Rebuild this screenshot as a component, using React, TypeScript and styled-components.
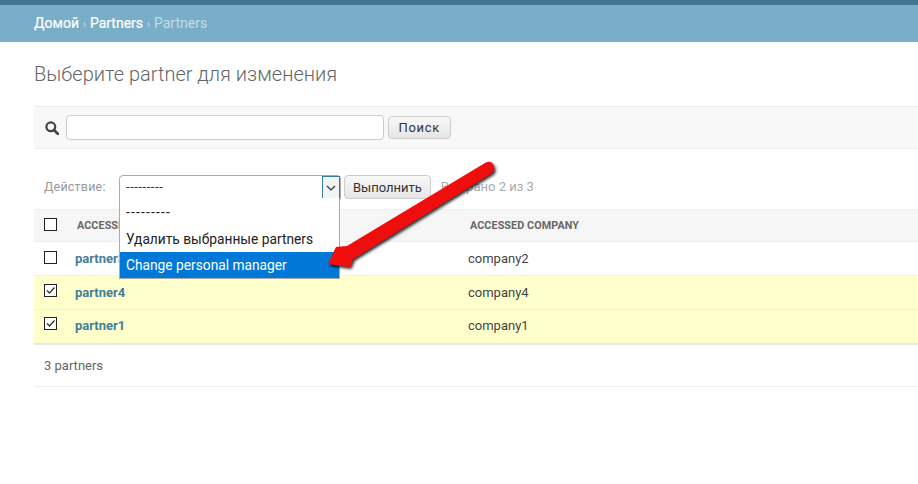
import React from "react";
import styled, { createGlobalStyle } from "styled-components";

const Global = createGlobalStyle`
  html, body { margin: 0; padding: 0; background: #fff; }
  body { font-family: Roboto, "Liberation Sans", sans-serif; color: #333; width: 918px; height: 484px; overflow: hidden; }
`;
const Page = styled.div`width: 918px; height: 484px; overflow: hidden; position: relative;`;
const TopBar = styled.div`height: 5px; background: #417690;`;
const Crumbs = styled.nav`
  height: 37px; background: #79aec8; padding-left: 34px; display: flex; align-items: center;
  font-size: 14px; color: #c4dce8; gap: 3.5px; padding-bottom: 1px; box-sizing: border-box;
`;
const CrumbLink = styled.a`color: #fff; font-weight: 400; -webkit-text-stroke: 0.2px #fff;`;
const Sep = styled.span`font-size: 13px; color: #c4dce8;`;
const Content = styled.main`padding: 20px 0 0 34px;`;
const Title = styled.h1`
  margin: 0; font-size: 20px; line-height: 24px; font-weight: 300; color: #666; height: 44px;
`;
const SearchBar = styled.div`
  height: 43px; box-sizing: border-box; background: #f8f8f8; border-top: 1px solid #eee; border-bottom: 1px solid #eee;
  display: flex; align-items: center; padding: 0 0 0 11px;
`;
const SearchIcon = styled.svg`width: 14px; height: 14px; margin-right: 7px; flex: none;`;
const SearchInput = styled.div`
  width: 316px; height: 23px; margin-right: 4px; background: #fff; border: 1px solid #ccc; border-radius: 4px; box-sizing: content-box;
`;
const Btn = styled.div`
  height: 21px; box-sizing: content-box; padding: 0 9.5px; display: flex; align-items: center;
  background: linear-gradient(#f8f8f8, #e6e6e6); border: 1px solid #ccc; border-radius: 4px;
  font-size: 13px; color: #333; letter-spacing: 0.7px;
`;
const Actions = styled.div`
  height: 60px; box-sizing: border-box; padding: 26px 0 0 10px; display: flex; align-items: flex-start;
  font-size: 12.5px; color: #999; position: relative;
`;
const ActionLabel = styled.span`width: 75px; line-height: 24px; letter-spacing: 0.2px;`;
const Select = styled.div`
  height: 23px; box-sizing: content-box; border: 1px solid #aaa; border-radius: 4px 4px 0 0; background: #fff; color: #333;
  font-size: 13px; line-height: 22px; margin-right: 3px; position: relative; padding-left: 6px; width: 214px; letter-spacing: 0.55px;
`;
const Caret = styled.span`
  position: absolute; right: 0; top: 0; bottom: 0; width: 16px; border: 1px solid #3a7ca0; background: #f0f4f6;
  display: flex; align-items: center; justify-content: center;
`;
const Menu = styled.ul`
  position: absolute; left: -1px; top: 22px; width: 221px; margin: 0; padding: 1px 0 0; list-style: none; background: #fff;
  border: 1px solid #aaa; border-top: none; z-index: 2; box-sizing: border-box;
`;
const MenuItem = styled.li<{ $active?: boolean; $wide?: boolean }>`
  height: 26px; line-height: 27px; padding-left: 6px; font-size: 13.75px; white-space: nowrap;
  letter-spacing: ${p => (p.$wide ? "1.2px" : "0")};
  background: ${p => (p.$active ? "#0078d7" : "#fff")}; color: ${p => (p.$active ? "#fff" : "#222")};
`;
const MenuMiddle = styled(MenuItem)`height: 27px; line-height: 29px;`;
const RunBtn = styled(Btn)`height: 22px; padding: 0 8px; letter-spacing: 0;`;
const Counter = styled.span`margin-left: 10px; line-height: 24px; font-size: 13px; color: #aaa;`;
const Table = styled.div`border-bottom: 2px solid #e6e6e6;`;
const HeadRow = styled.div`
  display: grid; grid-template-columns: 43px 393px 1fr; height: 33px; background: #f6f6f6; border-top: 1px solid #eee;
  border-bottom: 1px solid #eee; box-sizing: border-box; align-items: center;
  font-size: 10.75px; font-weight: 700; color: #666; letter-spacing: 0.1px;
`;
const Row = styled.div<{ $selected?: boolean }>`
  display: grid; grid-template-columns: 41px 393px 1fr; height: 34px; box-sizing: border-box; align-items: center;
  background: ${p => (p.$selected ? "#ffffcc" : "#fff")}; border-bottom: 1px solid #eee; font-size: 13px; color: #444;
  &:last-child { border-bottom: none; height: 33px; padding-bottom: 2px; }
`;
const Box = styled.span<{ $checked?: boolean }>`
  width: 11px; height: 11px; border: 1px solid #222; margin: 0 0 ${p => (p.$checked ? "4px" : "2px")} 10px; display: block; position: relative; background: #fff;
`;
const PartnerLink = styled.a`color: #447e9b; font-weight: 700; font-size: 13px;`;
const Paginator = styled.div`
  height: 42px; box-sizing: border-box; padding-left: 10px; display: flex; align-items: center; border-bottom: 1px solid #eee;
  font-size: 13px; color: #666;
`;
const ArrowArt = styled.svg`position: absolute; left: 320px; top: 155px; width: 185px; height: 125px; z-index: 3; pointer-events: none;`;

const Tick = () => (
  <svg width="11" height="11" viewBox="0 0 11 11" style={{ display: "block" }}>
    <path d="M2 5.5 L4.5 8 L9.5 2.5" fill="none" stroke="#333" strokeWidth="1.3" />
  </svg>
);

export default function App() {
  return (
    <Page>
      <Global />
      <TopBar />
      <Crumbs>
        <CrumbLink>Домой</CrumbLink><Sep>›</Sep><CrumbLink>Partners</CrumbLink><Sep>›</Sep><span>Partners</span>
      </Crumbs>
      <Content>
        <Title>Выберите partner для изменения</Title>
        <SearchBar>
          <SearchIcon viewBox="0 0 14 14">
            <circle cx="5.8" cy="5.8" r="4.4" fill="none" stroke="#444" strokeWidth="2.2" />
            <path d="M9 9 L13 13" stroke="#444" strokeWidth="2.6" strokeLinecap="round" />
          </SearchIcon>
          <SearchInput />
          <Btn>Поиск</Btn>
        </SearchBar>
        <Actions>
          <ActionLabel>Действие:</ActionLabel>
          <Select>
            ---------
            <Caret>
              <svg width="10" height="6" viewBox="0 0 10 6"><path d="M1 1 L5 5 L9 1" fill="none" stroke="#333" strokeWidth="1.2" /></svg>
            </Caret>
            <Menu>
              <MenuItem $wide>---------</MenuItem>
              <MenuMiddle>Удалить выбранные partners</MenuMiddle>
              <MenuItem $active>Change personal manager</MenuItem>
            </Menu>
          </Select>
          <RunBtn>Выполнить</RunBtn>
          <Counter>Выбрано 2 из 3</Counter>
        </Actions>
        <Table>
          <HeadRow>
            <Box />
            <span>ACCESSED PARTNER</span>
            <span>ACCESSED COMPANY</span>
          </HeadRow>
          <Row>
            <Box />
            <PartnerLink>partner3</PartnerLink>
            <span>company2</span>
          </Row>
          <Row $selected>
            <Box $checked><Tick /></Box>
            <PartnerLink>partner4</PartnerLink>
            <span>company4</span>
          </Row>
          <Row $selected>
            <Box $checked><Tick /></Box>
            <PartnerLink>partner1</PartnerLink>
            <span>company1</span>
          </Row>
        </Table>
        <Paginator>3 partners</Paginator>
      </Content>
      <ArrowArt viewBox="0 0 185 125">
        <defs>
          <filter id="sh" x="-20%" y="-20%" width="140%" height="140%">
            <feDropShadow dx="1.5" dy="2" stdDeviation="1.5" floodColor="#000" floodOpacity="0.85" />
          </filter>
        </defs>
        <path
          d="M8 109 L16 92 L27 91 L165 8 Q170 5 173 9 Q176 15 172 18 L33 104 L30 112 Z"
          fill="#f00a0a"
          filter="url(#sh)"
        />
      </ArrowArt>
    </Page>
  );
}
